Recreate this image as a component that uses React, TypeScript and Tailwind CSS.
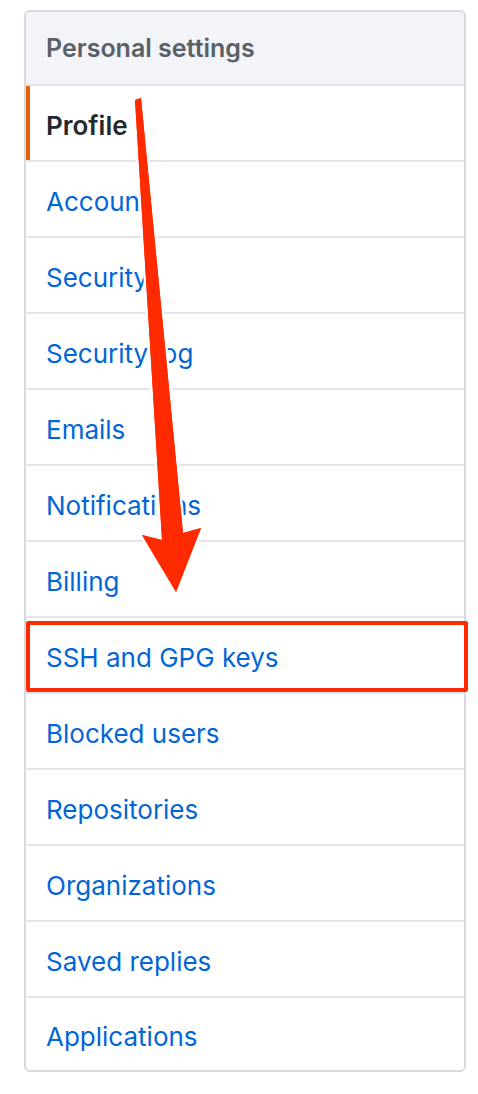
import React from "react";

const items = [
  "Account",
  "Security",
  "Security log",
  "Emails",
  "Notifications",
  "Billing",
  "SSH and GPG keys",
  "Blocked users",
  "Repositories",
  "Organizations",
  "Saved replies",
  "Applications",
];

const App: React.FC = () => {
  return (
    <div
      className="relative w-[478px] h-[1094px] bg-white pt-[10px] pl-[24px]"
      style={{ fontFamily: 'Inter, "Liberation Sans", Arial, sans-serif' }}
    >
      <nav className="relative w-[442px] rounded-[6px] border-2 border-[#d6d9de] overflow-hidden">
        <div className="h-[72px] bg-[#f3f4f7] flex items-center pt-[2px] pl-[20px] text-[25px] font-semibold text-[#586069]">
          Personal settings
        </div>
        <div className="relative h-[76px] border-t-2 border-[#e3e5e9] flex items-center pt-[4px] pl-[20px] text-[26px] font-semibold text-[#24292e]">
          <span className="absolute left-0 top-0 bottom-0 w-[4px] bg-[#e36209]" />
          Profile
        </div>
        {items.map((label, i) => (
          <div
            key={label}
            className={
              i === items.length - 1
                ? "h-[74px] border-t-2 border-[#e3e5e9] flex items-center pt-[4px] pl-[20px] text-[26px] text-[#0366d6]"
                : "h-[76px] border-t-2 border-[#e3e5e9] flex items-center pt-[4px] pl-[20px] text-[26px] text-[#0366d6]"
            }
          >
            {label}
          </div>
        ))}
      </nav>

      {/* annotation box around SSH row */}
      <div className="absolute left-[26px] top-[621px] w-[442px] h-[71px] border-[4px] border-[#ff2a00] rounded-[2px] pointer-events-none" />

      {/* annotation arrow */}
      <svg
        className="absolute left-0 top-0 pointer-events-none"
        width="478"
        height="1094"
        viewBox="0 0 478 1094"
      >
        <polygon
          points="135,100 141,98 183,533 201,528 176,592 142,535 162,540"
          fill="#ff2a00"
          stroke="#ffffff"
          strokeWidth="5"
          strokeLinejoin="round"
          paintOrder="stroke"
        />
        <polygon
          points="135,100 141,98 183,533 201,528 176,592 142,535 162,540"
          fill="#ff2a00"
          strokeLinejoin="round"
        />
      </svg>
    </div>
  );
};

export default App;
